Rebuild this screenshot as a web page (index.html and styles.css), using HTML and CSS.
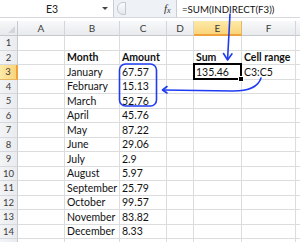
FILE: index.html
```html
<!DOCTYPE html>
<html lang="en">
<head>
    <meta charset="UTF-8">
    <title>SUM INDIRECT</title>
    <link rel="stylesheet" href="styles.css">
</head>
<body>
    <div class="excel">
        <div class="formula-bar">
            <div class="name-box">
                <span class="name">E3</span>
                <span class="drop"></span>
            </div>
            <div class="fx-zone">
                <span class="grip"></span>
                <span class="fx">f<sub>x</sub></span>
            </div>
            <div class="formula">=SUM(INDIRECT(F3))</div>
        </div>

        <div class="sheet">
            <div class="corner"></div>
            <div class="col-h">A</div>
            <div class="col-h">B</div>
            <div class="col-h">C</div>
            <div class="col-h">D</div>
            <div class="col-h sel">E</div>
            <div class="col-h">F</div>
            <div class="col-h"></div>

            <div class="row-h">1</div>
            <div class="cell"></div><div class="cell"></div><div class="cell"></div><div class="cell"></div><div class="cell"></div><div class="cell"></div><div class="cell"></div>

            <div class="row-h">2</div>
            <div class="cell"></div><div class="cell bold">Month</div><div class="cell bold">Amount</div><div class="cell"></div><div class="cell bold">Sum</div><div class="cell bold">Cell range</div><div class="cell"></div>

            <div class="row-h sel">3</div>
            <div class="cell"></div><div class="cell">January</div><div class="cell">67.57</div><div class="cell"></div><div class="cell active">135.46</div><div class="cell">C3:C5</div><div class="cell"></div>

            <div class="row-h">4</div>
            <div class="cell"></div><div class="cell">February</div><div class="cell">15.13</div><div class="cell"></div><div class="cell"></div><div class="cell"></div><div class="cell"></div>

            <div class="row-h">5</div>
            <div class="cell"></div><div class="cell">March</div><div class="cell">52.76</div><div class="cell"></div><div class="cell"></div><div class="cell"></div><div class="cell"></div>

            <div class="row-h">6</div>
            <div class="cell"></div><div class="cell">April</div><div class="cell">45.76</div><div class="cell"></div><div class="cell"></div><div class="cell"></div><div class="cell"></div>

            <div class="row-h">7</div>
            <div class="cell"></div><div class="cell">May</div><div class="cell">87.22</div><div class="cell"></div><div class="cell"></div><div class="cell"></div><div class="cell"></div>

            <div class="row-h">8</div>
            <div class="cell"></div><div class="cell">June</div><div class="cell">29.06</div><div class="cell"></div><div class="cell"></div><div class="cell"></div><div class="cell"></div>

            <div class="row-h">9</div>
            <div class="cell"></div><div class="cell">July</div><div class="cell">2.9</div><div class="cell"></div><div class="cell"></div><div class="cell"></div><div class="cell"></div>

            <div class="row-h">10</div>
            <div class="cell"></div><div class="cell">August</div><div class="cell">5.97</div><div class="cell"></div><div class="cell"></div><div class="cell"></div><div class="cell"></div>

            <div class="row-h">11</div>
            <div class="cell"></div><div class="cell">September</div><div class="cell">25.79</div><div class="cell"></div><div class="cell"></div><div class="cell"></div><div class="cell"></div>

            <div class="row-h">12</div>
            <div class="cell"></div><div class="cell">October</div><div class="cell">99.57</div><div class="cell"></div><div class="cell"></div><div class="cell"></div><div class="cell"></div>

            <div class="row-h">13</div>
            <div class="cell"></div><div class="cell">November</div><div class="cell">83.82</div><div class="cell"></div><div class="cell"></div><div class="cell"></div><div class="cell"></div>

            <div class="row-h">14</div>
            <div class="cell"></div><div class="cell">December</div><div class="cell">8.33</div><div class="cell"></div><div class="cell"></div><div class="cell"></div><div class="cell"></div>

            <!-- row 15 only peeks in at the bottom edge -->
            <div class="row-h"></div>
            <div class="cell"></div><div class="cell"></div><div class="cell"></div><div class="cell"></div><div class="cell"></div><div class="cell"></div><div class="cell"></div>
        </div>

        <!-- hand-drawn blue notes over the sheet -->
        <svg class="notes" width="300" height="242" viewBox="0 0 300 242">
            <g fill="none" stroke="#1f3cf2" stroke-width="1.6" stroke-linecap="round" stroke-linejoin="round">
                <path d="M230 14 L227.6 59"/>
                <path d="M223.5 53.5 L227.6 60 L232 53.8"/>
                <rect x="119.5" y="64" width="37" height="42" rx="6"/>
                <path d="M261 78 Q257 91 233 91 Q195 90.5 163 90"/>
                <path d="M167 86.5 L162.5 90 L167 93"/>
            </g>
        </svg>
    </div>
</body>
</html>
```

FILE: styles.css
```css
body {
    margin: 0;
    background: #fff;
}

.excel {
    position: relative;
    width: 300px;
    height: 242px;
    overflow: hidden;
    background: #fff;
    font-family: Lato, "Liberation Sans", sans-serif;
    font-size: 10.5px;
    color: #111;
}

/* formula bar */
.formula-bar {
    display: flex;
    height: 17px;
    background: #eef1f5;
    border-bottom: 1px solid #d5d9df;
    margin-bottom: 3px;
}

.name-box {
    width: 114px;
    display: flex;
    align-items: center;
    background: #fff;
    border-right: 1px solid #c9ced6;
    box-sizing: border-box;
}

.name {
    flex: 1;
    padding-left: 46px;
    font-size: 10.5px;
    color: #222;
}

.drop {
    width: 0;
    height: 0;
    margin-right: 5px;
    border-left: 3px solid transparent;
    border-right: 3px solid transparent;
    border-top: 3px solid #444;
}

.fx-zone {
    width: 63px;
    display: flex;
    align-items: center;
    box-sizing: border-box;
    padding-left: 3px;
    border-right: 1px solid #c9ced6;
}

.grip {
    width: 7px;
    height: 11px;
    border: 1px solid #c3c8cf;
    border-radius: 6px 0 0 6px;
    background: linear-gradient(#fbfcfd, #e4e8ee);
}

.fx {
    margin-left: 38px;
    font-family: "Liberation Serif", serif;
    font-style: italic;
    font-size: 11px;
    color: #333;
}

.fx sub {
    font-size: 8px;
    vertical-align: -1px;
}

.formula {
    flex: 1;
    display: flex;
    align-items: center;
    padding-left: 5px;
    background: #fff;
    font-size: 9.7px;
    color: #111;
}

/* grid */
.sheet {
    display: grid;
    grid-template-columns: 18px 47px 55px 47px 27px 48px 54px 20px;
    grid-template-rows: 15px repeat(15, 14.5px);
}

.sheet > div {
    box-sizing: border-box;
    display: flex;
    align-items: center;
    white-space: nowrap;
    overflow: hidden;
}

.corner {
    background: linear-gradient(#f6f7f9, #e7e9ec);
    border-right: 1px solid #c6cacf;
    border-bottom: 1px solid #c6cacf;
    position: relative;
}

.corner::after {
    content: "";
    position: absolute;
    right: 2px;
    bottom: 2px;
    border-left: 7px solid transparent;
    border-bottom: 7px solid #d3d6db;
}

.col-h {
    justify-content: center;
    background: linear-gradient(#f8f9fa, #e8eaed);
    border-right: 1px solid #d2d5da;
    border-bottom: 1px solid #c6cacf;
    color: #3b3b3b;
    font-size: 10px;
}

.row-h {
    justify-content: center;
    background: linear-gradient(90deg, #f3f4f6, #e9ebee);
    border-right: 1px solid #c6cacf;
    border-bottom: 1px solid #d5d8dc;
    color: #3b3b3b;
    font-size: 9.5px;
}

.col-h.sel {
    background: linear-gradient(#fdeaa8, #f9d47c);
    border-bottom: 2px solid #f0a23a;
    border-right-color: #e6b865;
}

.row-h.sel {
    background: linear-gradient(90deg, #fdeaa8, #f9d47c);
    border-right: 2px solid #f0a23a;
    border-bottom-color: #e6b865;
}

.cell {
    padding-left: 2px;
    border-right: 1px solid #dadcdd;
    border-bottom: 1px solid #dadcdd;
}

.bold {
    font-weight: bold;
}

.active {
    position: relative;
    overflow: visible !important;
    z-index: 2;
}

.active::before {
    content: "";
    position: absolute;
    top: -2px;
    left: -1px;
    right: -1px;
    bottom: -1px;
    border: 2px solid #000;
}

.active::after {
    content: "";
    position: absolute;
    right: -3px;
    bottom: -3px;
    width: 4px;
    height: 4px;
    background: #000;
    border: 1px solid #fff;
}

.notes {
    position: absolute;
    top: 0;
    left: 0;
    pointer-events: none;
}
```
